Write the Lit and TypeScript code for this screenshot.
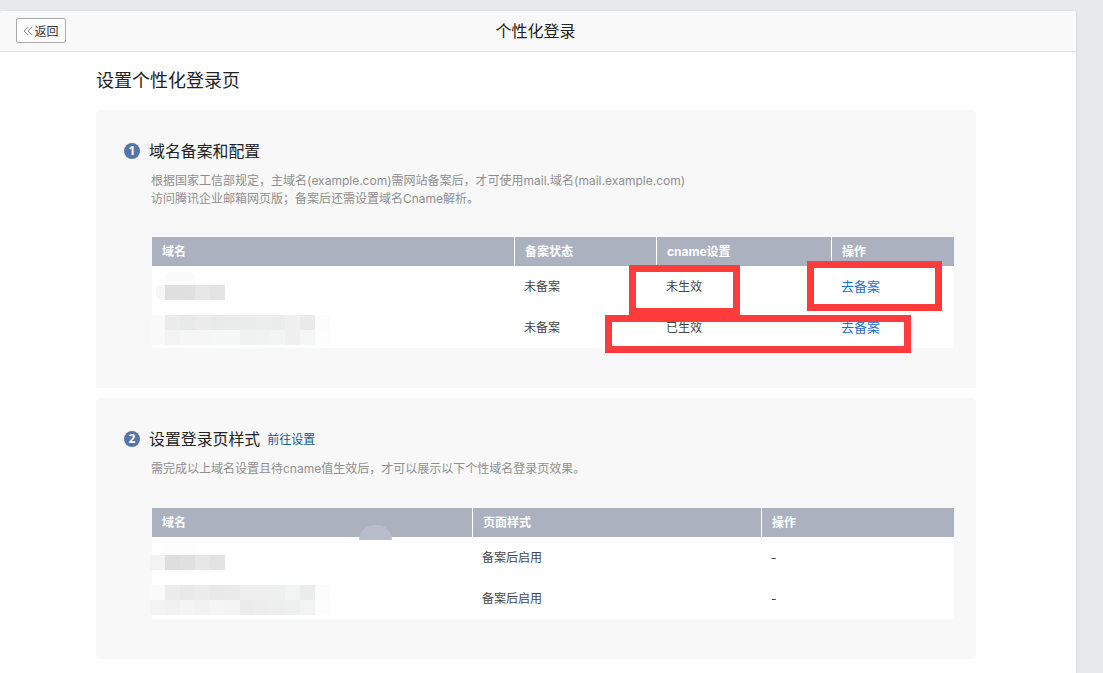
import { LitElement, html, css } from "lit";
import { customElement } from "lit/decorators.js";

type Row = string[];
const boxes = [{ cls: "b1" }, { cls: "b2" }, { cls: "b3" }];

function mosaic(cls: string, rows: string[][]) {
  return html`<div class="mosaic ${cls}">${rows.map(r => html`<div class="mrow">${r.map(c => html`<i style="background:${c}"></i>`)}</div>`)}</div>`;
}

@customElement("app-root")
export class AppRoot extends LitElement {
  static styles = css`
    :host { display: block; width: 1103px; height: 673px; overflow: hidden; background: #e8e9eb; position: relative;
      font-family: "Inter", "Noto Sans CJK SC", sans-serif; color: #333; }
    .panel { margin-top: 11px; width: 1076px; height: 662px; background: #fff; border-radius: 3px 3px 0 0; box-shadow: 1px 0 2px rgba(0,0,0,.08); overflow: hidden; }
    .head { height: 40px; background: #f9f9f9; border-bottom: 1px solid #e3e3e3; padding-right: 5px; position: relative; }
    .head h1 { margin: 0; font-size: 16px; font-weight: 400; text-align: center; color: #222; line-height: 40px; }
    .back { position: absolute; left: 16px; top: 7px; box-sizing: border-box; width: 50px; height: 25px; border: 1px solid #aaa; border-radius: 2px; background: #fcfcfc; display: flex; align-items: center; justify-content: center; gap: 1px; font-size: 12px; color: #333; }
    .back svg { display: block; }
    .body { padding: 16px 0 0 96px; width: 880px; }
    h2 { margin: 0; font-size: 18px; font-weight: 400; line-height: 26px; color: #222; }
    .card { background: #f8f8f8; border-radius: 4px; box-sizing: border-box; padding: 31px 22px 0 28px; }
    .c1 { height: 278px; margin-top: 16px; }
    .c2 { height: 261px; margin-top: 10px; }
    .title { display: flex; align-items: center; gap: 9px; height: 18px; font-size: 15.9px; color: #222; }
    .num { width: 16px; height: 16px; margin-top: 2px; border-radius: 50%; background: #5674a6; color: #fff; font-size: 12px; font-weight: 700; line-height: 16px; text-align: center; font-family: "Open Sans", sans-serif; }
    .title a { font-size: 12px; color: #0f5a94; margin-left: -2px; margin-top: 1px; }
    .desc { margin: 13px 0 0 27px; font-size: 12px; line-height: 18px; color: #8f8f8f; height: 36px; }
    .c2 .desc { height: 18px; }
    .table { margin: 29px 0 0 28px; width: 802px; background: #fff; }
    .c2 .table { margin-top: 30px; }
    .tr { display: grid; }
    .t1 .tr { grid-template-columns: 362px 142px 175px 123px; }
    .t2 .tr { grid-template-columns: 320px 289px 193px; }
    .th { height: 29px; background: #abb1bf; }
    .th > div { font-size: 12px; font-weight: 700; color: #fff; line-height: 29px; padding-left: 10px; border-left: 1px solid #fff; }
    .th > div:first-child { border-left: 0; }
    .td { height: 41px; }
    .td > div { font-size: 12px; color: #444; line-height: 41px; padding-left: 10px; box-sizing: border-box; height: 41px; }
    .td .link { color: #1f6fd8; font-size: 13px; }
    .overlays { position: absolute; inset: 0; pointer-events: none; }
    .red { position: absolute; box-sizing: border-box; border: 7px solid #ff3b3b; }
    .b1 { left: 629px; top: 265px; width: 111px; height: 50px; }
    .b2 { left: 807px; top: 261px; width: 135px; height: 50px; }
    .b3 { left: 605px; top: 315px; width: 306px; height: 38px; }
    .mosaic { position: absolute; }
    .mrow { display: flex; height: 15px; }
    .mrow i { display: block; width: 15px; height: 15px; flex: none; }
    .m1 { left: 165px; top: 285px; }
    .m2 { left: 150px; top: 315px; }
    .m3 { left: 150px; top: 555px; }
    .m4 { left: 150px; top: 585px; }
    .halo { position: absolute; left: 165px; width: 30px; height: 13px; background: #fbfbfb; border-radius: 5px 5px 0 0; }
    .h1 { top: 272px; }
    .h3 { top: 542px; background: #fdfdfd; }
    .notch { position: absolute; left: 156px; top: 285px; width: 9px; height: 15px; background: #f6f6f6; border-radius: 5px 0 0 5px; }
    .dome { position: absolute; left: 359px; top: 525px; width: 33px; height: 15px; background: #b9bdca; border-radius: 16px 16px 0 0; }
  `;

  render() {
    const t1: Row[] = [["", "未备案", "未生效", "去备案"], ["", "未备案", "已生效", "去备案"]];
    const t2: Row[] = [["", "备案后启用", "-"], ["", "备案后启用", "-"]];
    return html`
      <div class="panel">
        <div class="head">
          <div class="back"><svg width="10" height="10" viewBox="0 0 10 10" fill="none" stroke="#888" stroke-width="1"><path d="M5 1 1 5l4 4M9 1 5 5l4 4"/></svg>返回</div>
          <h1>个性化登录</h1>
        </div>
        <div class="body">
          <h2>设置个性化登录页</h2>
          <section class="card c1">
            <div class="title"><span class="num">1</span>域名备案和配置</div>
            <p class="desc">根据国家工信部规定，主域名(example.com)需网站备案后，才可使用mail.域名(mail.example.com)<br />访问腾讯企业邮箱网页版；备案后还需设置域名Cname解析。</p>
            <div class="table t1">
              <div class="tr th"><div>域名</div><div>备案状态</div><div>cname设置</div><div>操作</div></div>
              ${t1.map(r => html`<div class="tr td"><div></div><div>${r[1]}</div><div>${r[2]}</div><div class="link">${r[3]}</div></div>`)}
            </div>
          </section>
          <section class="card c2">
            <div class="title"><span class="num">2</span>设置登录页样式 <a>前往设置</a></div>
            <p class="desc">需完成以上域名设置且待cname值生效后，才可以展示以下个性域名登录页效果。</p>
            <div class="table t2">
              <div class="tr th"><div>域名</div><div>页面样式</div><div>操作</div></div>
              ${t2.map(r => html`<div class="tr td"><div></div><div>${r[1]}</div><div>${r[2]}</div></div>`)}
            </div>
          </section>
        </div>
      </div>
      <div class="overlays">
        ${boxes.map(b => html`<div class="red ${b.cls}"></div>`)}
        <div class="halo h1"></div>
        <div class="notch"></div>
        <div class="halo h3"></div>
        ${mosaic("m1", [["#dfdfdf", "#e0e0e0", "#e7e7e7", "#e4e4e4"]])}
        ${mosaic("m2", [
          ["#f9f9f9", "#ebebeb", "#e8e9e9", "#ececec", "#eaeaea", "#ebebeb", "#ececec", "#ededed", "#ececec", "#f0f0f0", "#eaeaea", "#fcfcfc"],
          ["#f9f9f9", "#f3f3f3", "#f6f6f6", "#f6f6f6", "#f6f7f7", "#f6f7f7", "#f0f2f1", "#f1f2f2", "#f3f5f4", "#f0f0f0", "#f5f7f6", "#fdfdfd"],
        ])}
        ${mosaic("m3", [["#f3f3f3", "#dedede", "#e0e0e0", "#e7e7e7", "#e3e3e3"]])}
        ${mosaic("m4", [
          ["#fafafa", "#ececec", "#e9e9e9", "#ececec", "#e9e9e9", "#eaeaea", "#efefef", "#efefef", "#eef0ef", "#f2f3f3", "#ebedec", "#fcfcfc"],
          ["#f3f3f3", "#f1f1f1", "#f4f4f4", "#f2f2f2", "#f5f5f5", "#f4f4f4", "#ebebeb", "#ededed", "#eeeeee", "#eef0ef", "#f3f3f3", "#fdfdfd"],
        ])}
        <div class="dome"></div>
      </div>
    `;
  }
}
